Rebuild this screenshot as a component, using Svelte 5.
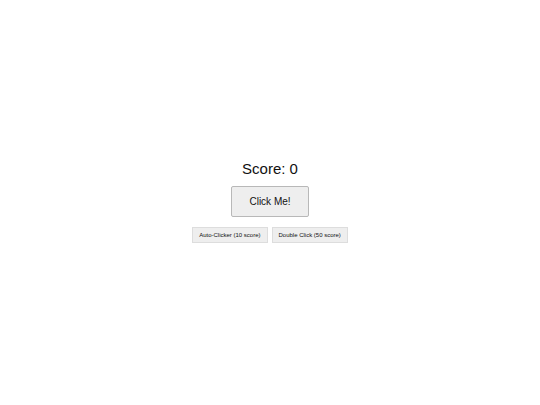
<script lang="ts">
import { onMount } from 'svelte';

const autoCost = 10;
const doubleCost = 50;

let score: number = 0;
let clickPower: number = 1;
let autoClickers: number = 0;

onMount(() => {
    const timer = setInterval(() => {
      score += autoClickers;
    }, 1000);

    return () => clearInterval(timer);
  });

function handleClick() {
    score += clickPower;
  }

function buyAutoClicker() {
    if (score >= autoCost) {
      score -= autoCost;
      autoClickers += 1;
    }
  }

function buyDoubleClick() {
    if (score >= doubleCost) {
      score -= doubleCost;
      clickPower *= 2;
    }
  }
</script>

<main class="game">
    <div class="score">Score: {score}</div>
    <button class="click-button" on:click={handleClick}>Click Me!</button>
    <div class="upgrades">
        <button class="upgrade" on:click={buyAutoClicker}>Auto-Clicker ({autoCost} score)</button>
        <button class="upgrade" on:click={buyDoubleClick}>Double Click ({doubleCost} score)</button>
    </div>
</main>

<style>
:global(body) {
  background: #fff;
}

.game {
  display: flex;
  flex-direction: column;
  align-items: center;
  justify-content: center;
  box-sizing: border-box;
  min-height: 100vh;
  padding-bottom: 2px;
  font-family: "Liberation Sans", Arial, sans-serif;
  color: #111;
}

.score {
  font-size: 15px;
  line-height: 18px;
  margin-bottom: 8px;
}

button {
  font-family: inherit;
  color: #111;
  background: #eee;
  cursor: pointer;
}

.click-button {
  font-size: 10px;
  line-height: 13px;
  padding: 8px 17px;
  border: 1px solid #b8b8b8;
  border-radius: 2px;
}

.upgrades {
  display: flex;
  gap: 4px;
  margin-top: 10px;
}

.upgrade {
  font-size: 6px;
  line-height: 8px;
  padding: 3px 6px;
  border: 1px solid #ddd;
  border-radius: 0;
}
</style>
